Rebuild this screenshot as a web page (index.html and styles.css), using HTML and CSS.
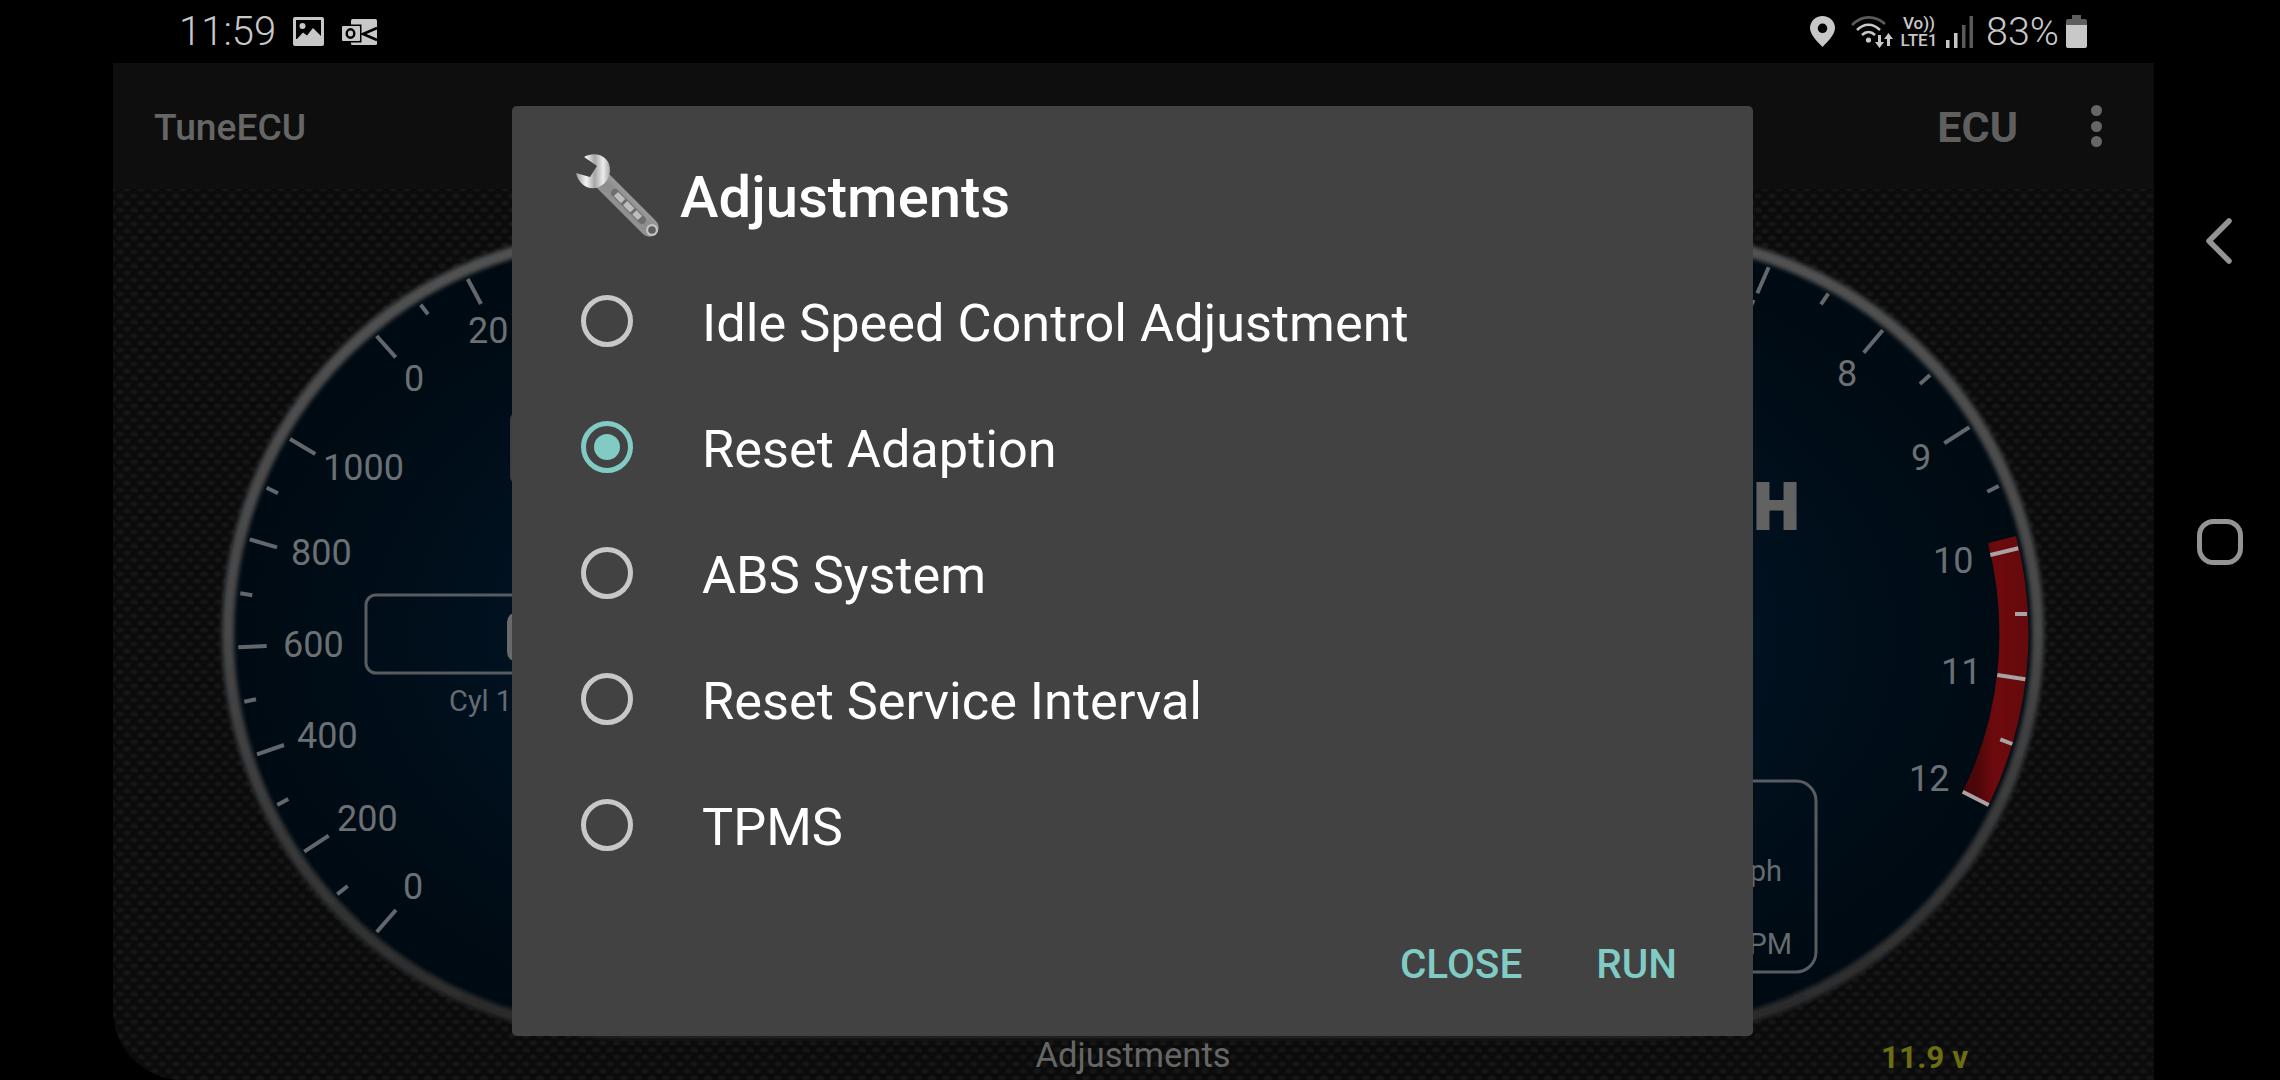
FILE: index.html
```html
<!DOCTYPE html>
<html lang="en">
<head>
<meta charset="utf-8">
<title>TuneECU</title>
<link rel="stylesheet" href="styles.css">
</head>
<body>
<div class="screen">
  <header class="status">
    <div class="status-left">
      <span class="clock">11:59</span>
      <svg class="ic-image" viewBox="0 0 31 29"><rect width="31" height="29" rx="2" fill="#c8c8c8"/><rect x="3" y="3" width="25" height="19" fill="#000"/><circle cx="9.500" cy="9" r="3" fill="#c8c8c8"/><path d="M3 23 L10 15.500 L14 18.500 L20 11 L28 19 V26 H3 Z" fill="#c8c8c8"/></svg>
      <svg class="ic-outlook" viewBox="0 0 35 26"><rect x="9" y="0" width="26" height="26" rx="1.500" fill="#c8c8c8"/><path d="M35 9 L21 15 L35 21" fill="none" stroke="#000" stroke-width="2.600"/><rect x="-1.500" y="5.500" width="21" height="18" fill="#000"/><rect x="0" y="7" width="18" height="15" rx="1" fill="#c8c8c8"/><ellipse cx="8.500" cy="14.500" rx="3.800" ry="4.200" fill="none" stroke="#000" stroke-width="2.400"/></svg>
    </div>
    <div class="status-right">
      <svg class="ic-pin" viewBox="0 0 25 31"><path fill-rule="evenodd" d="M12.500 0 C5.500 0 0 5.500 0 12 C0 19 8 26 12.500 31 C17 26 25 19 25 12 C25 5.500 19.500 0 12.500 0 Z M12.500 7.500 A4.800 4.800 0 1 1 12.500 17.100 A4.800 4.800 0 1 1 12.500 7.500 Z" fill="#c8c8c8"/></svg>
      <svg class="ic-wifi" viewBox="0 0 42 32"><path d="M1 9 C11 -1 24 -1 34 8" fill="none" stroke="#5a5a5a" stroke-width="2.600"/><path d="M6 14 C13 7 22 7 29 14" fill="none" stroke="#c8c8c8" stroke-width="2.600"/><path d="M11 19 C15 15 20 15 24 19" fill="none" stroke="#c8c8c8" stroke-width="2.600"/><circle cx="17.500" cy="24" r="2.600" fill="#c8c8c8"/><path d="M27 19 H30 V26 H33 L28.500 32 L24 26 H27 Z" fill="#c8c8c8"/><path d="M36 30 H39 V23 H42 L37.500 17 L33 23 H36 Z" fill="#c8c8c8"/></svg>
      <div class="volte"><span class="vo">Vo))</span><span class="lte">LTE1</span></div>
      <svg class="ic-signal" viewBox="0 0 27 32"><rect x="0" y="24" width="3.500" height="8" fill="#c8c8c8"/><rect x="8" y="17" width="3.500" height="15" fill="#c8c8c8"/><rect x="16" y="9" width="3.500" height="23" fill="#5a5a5a"/><rect x="23.500" y="0" width="3.500" height="32" fill="#5a5a5a"/></svg>
      <span class="pct">83%</span>
      <svg class="ic-battery" viewBox="0 0 21 33"><path d="M6 0 H15 V4 H19 Q21 4 21 6 V10 H0 V6 Q0 4 2 4 H6 Z" fill="#5e5e5e"/><path d="M0 10 H21 V31 Q21 33 19 33 H2 Q0 33 0 31 Z" fill="#c8c8c8"/></svg>
    </div>
  </header>

  <div class="body">
    <main class="app">
      <div class="toolbar">
        <span class="app-title">TuneECU</span>
        <div class="actions">
          <span class="ecu">ECU</span>
          <div class="dots"><i></i><i></i><i></i></div>
        </div>
      </div>
      <div class="panel">
        <svg class="gauge" viewBox="113 189 2041 891">
          <defs>
            <radialGradient id="face" gradientUnits="userSpaceOnUse" cx="1133" cy="634" r="900" gradientTransform="translate(0 300) scale(1 .53)">
              <stop offset="0" stop-color="#03172b"/>
              <stop offset=".65" stop-color="#011221"/>
              <stop offset="1" stop-color="#000a12"/>
            </radialGradient>
            <linearGradient id="rim" x1="0" y1="0" x2="0" y2="1">
              <stop offset="0" stop-color="#525252"/>
              <stop offset=".5" stop-color="#484848"/>
              <stop offset="1" stop-color="#2a2a2a"/>
            </linearGradient>
            <linearGradient id="redzone" gradientUnits="userSpaceOnUse" x1="1975" y1="0" x2="2030" y2="0">
              <stop offset="0" stop-color="#4a0608"/>
              <stop offset=".35" stop-color="#6e0a0e"/>
              <stop offset="1" stop-color="#640a0c"/>
            </linearGradient>
            <filter id="soft" x="-5%" y="-5%" width="110%" height="110%"><feGaussianBlur stdDeviation="2"/></filter>
          </defs>
          <rect class="face" x="222" y="230" width="1822" height="808" rx="404" fill="url(#face)"/>
          <rect class="rim" x="228" y="236" width="1810" height="796" rx="398" stroke="url(#rim)" filter="url(#soft)"/>
          <path class="red" d="M2002 539.700 A374 374 0 0 1 1975.700 798.300" stroke="url(#redzone)"/>

          <g class="ticks">
            <line x1="467.700" y1="279" x2="481" y2="304"/>
            <line x1="420.700" y1="304.700" x2="428" y2="314.300"/>
            <line x1="376.700" y1="336" x2="395.700" y2="357.300"/>
            <line x1="290" y1="439" x2="315.300" y2="454"/>
            <line x1="266.700" y1="487.700" x2="278" y2="493.300"/>
            <line x1="249.700" y1="539.300" x2="277" y2="547.300"/>
            <line x1="240.300" y1="593.300" x2="252.300" y2="595.300"/>
            <line x1="238.300" y1="647.300" x2="266.700" y2="646"/>
            <line x1="244.300" y1="701.700" x2="256" y2="699.300"/>
            <line x1="257" y1="754.300" x2="284" y2="745"/>
            <line x1="277.300" y1="805" x2="288.300" y2="799"/>
            <line x1="304.300" y1="851.700" x2="328.700" y2="835.700"/>
            <line x1="337.300" y1="894.300" x2="347.700" y2="886"/>
            <line x1="376.700" y1="932" x2="396" y2="910"/>
            <line x1="1757.300" y1="293.300" x2="1768.700" y2="267.300"/>
            <line x1="1821" y1="304.300" x2="1828.300" y2="293.700"/>
            <line x1="1863.700" y1="352.700" x2="1882.700" y2="330.300"/>
            <line x1="1920" y1="384" x2="1930" y2="375"/>
            <line x1="1944.300" y1="443.300" x2="1969.300" y2="427.300"/>
            <line x1="1987.300" y1="491.700" x2="1998.700" y2="486"/>
          </g>
          <g class="ticks-red">
            <line x1="1990.300" y1="555" x2="2018.300" y2="548.300"/>
            <line x1="2015" y1="614" x2="2027" y2="614"/>
            <line x1="1997.300" y1="675" x2="2025.300" y2="679.300"/>
            <line x1="2000.300" y1="739.300" x2="2012.300" y2="744"/>
            <line x1="1962.700" y1="791.700" x2="1988.700" y2="805"/>
          </g>

          <g class="scale">
            <text x="468" y="343">20</text>
            <text x="404" y="391">0</text>
            <text x="323" y="480">1000</text>
            <text x="291" y="565">800</text>
            <text x="283" y="657">600</text>
            <text x="297" y="748">400</text>
            <text x="337" y="831">200</text>
            <text x="403" y="899">0</text>
            <text x="1736" y="326">7</text>
            <text x="1837" y="386">8</text>
            <text x="1911" y="470">9</text>
            <text x="1933" y="573">10</text>
            <text x="1941" y="684">11</text>
            <text x="1909" y="791">12</text>
          </g>

          <rect class="box" x="366" y="595" width="300" height="78" rx="10"/>
          <rect class="box" x="1560" y="781" width="256" height="191" rx="20"/>
          <rect class="chip" x="510" y="413" width="40" height="70" rx="6"/>
          <rect class="chip-light" x="507" y="612" width="40" height="50" rx="10"/>
          <text class="small" x="449" y="711">Cyl 1</text>
          <text class="small end" x="1782" y="881">Kph</text>
          <text class="small end" x="1792" y="954">RPM</text>
          <text class="speed" x="1799" y="529">MPH</text>

          <text class="mode" x="1133" y="1067">Adjustments</text>
          <text class="volt" x="1881" y="1068">11.9 v</text>
        </svg>
      </div>
    </main>
    <nav class="rail">
      <svg class="nav-back" viewBox="0 0 30 48"><path d="M25 4 L5 24 L25 44" fill="none" stroke="#949494" stroke-width="5.500" stroke-linecap="round" stroke-linejoin="round"/></svg>
      <svg class="nav-home" viewBox="0 0 46 46"><rect x="2.500" y="2.500" width="41" height="41" rx="14" fill="none" stroke="#949494" stroke-width="5"/></svg>
    </nav>
  </div>

  <section class="dialog">
    <div class="dialog-head">
      <svg class="wrench" viewBox="0 0 84 84">
        <defs>
          <linearGradient id="steel" x1="0" y1="0" x2="1" y2="0">
            <stop offset="0" stop-color="#9a9a9a"/>
            <stop offset=".3" stop-color="#f4f4f4"/>
            <stop offset=".55" stop-color="#a6a6a6"/>
            <stop offset=".8" stop-color="#ececec"/>
            <stop offset="1" stop-color="#a8a8a8"/>
          </linearGradient>
          <linearGradient id="shaft" x1="0" y1="1" x2="1" y2="0">
            <stop offset="0" stop-color="#a8a8a8"/>
            <stop offset=".5" stop-color="#8c8c8c"/>
            <stop offset="1" stop-color="#d0d0d0"/>
          </linearGradient>
        </defs>
        <path d="M20 33 L33 20 L81 68 A9 9 0 0 1 68 81 Z" fill="url(#shaft)"/>
        <line x1="40" y1="40" x2="67" y2="67" stroke="#6e6e6e" stroke-width="8" stroke-linecap="round"/>
        <line x1="41" y1="41" x2="65" y2="65" stroke="#bdbdbd" stroke-width="6" stroke-dasharray="10 3"/>
        <circle cx="77" cy="77" r="6" fill="#c4c4c4"/>
        <circle cx="77" cy="77" r="3.800" fill="#5e5e5e"/>
        <path d="M9 4 C18 -1 30 1 34 11 C37 20 33 30 24 34 C14 38 4 32 1 20 L15 24 L22 13 Z" fill="url(#steel)"/>
      </svg>
      <h1 class="dialog-title">Adjustments</h1>
    </div>
    <div class="options">
      <div class="option"><span class="radio"></span><span class="option-label">Idle Speed Control Adjustment</span></div>
      <div class="option"><span class="radio on"></span><span class="option-label">Reset Adaption</span></div>
      <div class="option"><span class="radio"></span><span class="option-label">ABS System</span></div>
      <div class="option"><span class="radio"></span><span class="option-label">Reset Service Interval</span></div>
      <div class="option"><span class="radio"></span><span class="option-label">TPMS</span></div>
    </div>
    <div class="dialog-actions">
      <span class="btn">CLOSE</span>
      <span class="btn">RUN</span>
    </div>
  </section>
</div>
</body>
</html>
```

FILE: styles.css
```css
* { box-sizing: border-box; }
html, body { margin: 0; padding: 0; background: #000; }
.screen {
  position: relative;
  width: 2280px;
  height: 1080px;
  display: flex;
  flex-direction: column;
  overflow: hidden;
  font-family: Roboto, "Liberation Sans", sans-serif;
}

/* status bar */
.status {
  height: 63px;
  flex: none;
  display: flex;
  justify-content: space-between;
  padding: 0 193px 0 179px;
  color: #c8c8c8;
}
.status-left, .status-right { display: flex; align-items: center; }
.clock { font-size: 40px; font-weight: 300; line-height: 60px; width: 114px; }
.ic-image { width: 31px; height: 29px; }
.ic-outlook { width: 35px; height: 26px; margin-left: 18px; }
.ic-pin { width: 25px; height: 31px; }
.ic-wifi { width: 42px; height: 32px; margin-left: 16px; }
.volte { display: flex; flex-direction: column; align-items: center; width: 38px; margin-left: 7px; font-weight: 500; }
.vo { font-size: 17px; line-height: 18px; }
.lte { font-size: 17px; line-height: 17px; }
.ic-signal { width: 27px; height: 32px; margin-left: 8px; }
.pct { font-size: 39.5px; font-weight: 300; line-height: 60px; margin-left: 13px; }
.ic-battery { width: 21px; height: 33px; margin-left: 7px; }

/* body */
.body { flex: 1; display: flex; padding-left: 113px; min-height: 0; }
.app {
  width: 2041px;
  display: flex;
  flex-direction: column;
  border-bottom-left-radius: 70px;
  overflow: hidden;
}
.toolbar {
  height: 126px;
  flex: none;
  background: #0e0e0e;
  display: flex;
  justify-content: space-between;
  align-items: center;
  padding: 2px 52px 0 41px;
  color: #666;
}
.app-title { font-size: 37.2px; font-weight: 500; }
.actions { display: flex; align-items: center; gap: 73px; }
.ecu { font-size: 43px; font-weight: 700; color: #5f5f5f; }
.dots { display: flex; flex-direction: column; gap: 4.5px; margin-top: -2px; }
.dots i { display: block; width: 11px; height: 11px; border-radius: 50%; background: #666; }

.panel {
  flex: 1;
  background-color: #0b0b0b;
  background-image:
    radial-gradient(ellipse 5px 3.5px at 50% 50%, #171717 0, #161616 45%, transparent 100%),
    radial-gradient(ellipse 5px 3.5px at 50% 50%, #171717 0, #161616 45%, transparent 100%);
  background-size: 14px 14px;
  background-position: 0 0, 7px 7px;
}
.gauge { display: block; width: 2041px; height: 891px; }
.rim { fill: none; stroke-width: 12; }
.red { fill: none; stroke-width: 29; }
.ticks line { stroke: #63676b; stroke-width: 4; }
.ticks-red line { stroke: #a9a3a3; stroke-width: 4; }
.scale text { font-family: Roboto, sans-serif; font-size: 36px; fill: #6b7074; }
.box { fill: none; stroke: #585c61; stroke-width: 3; }
.chip { fill: #3b3e42; }
.chip-light { fill: #6a6a6a; }
.small { font-family: Roboto, sans-serif; font-size: 29px; fill: #666b70; }
.small.end { text-anchor: end; }
.speed { font-family: Roboto, sans-serif; font-size: 64px; font-weight: 900; fill: #626262; stroke: #626262; stroke-width: 2; text-anchor: end; }
.mode { font-family: Roboto, sans-serif; font-size: 34.5px; fill: #666; text-anchor: middle; }
.volt { font-family: Roboto, sans-serif; font-size: 31.5px; font-weight: 700; fill: #6c6c12; }

/* navigation rail */
.rail { flex: 1; display: flex; flex-direction: column; align-items: center; padding-top: 154px; }
.nav-back { width: 30px; height: 48px; margin-left: 3px; }
.nav-home { width: 46px; height: 46px; margin-top: 254px; margin-left: 5px; }

/* dialog */
.dialog {
  position: absolute;
  left: 512px;
  top: 106px;
  width: 1241px;
  height: 930px;
  background: #424242;
  border-radius: 5px;
  display: flex;
  flex-direction: column;
  color: #fff;
}
.dialog-head { height: 152px; flex: none; display: flex; align-items: flex-start; padding: 47px 0 0 63px; }
.wrench { width: 84px; height: 84px; flex: none; }
.dialog-title { margin: 12px 0 0 21px; font-size: 58px; line-height: 64px; font-weight: 500; }
.options { display: flex; flex-direction: column; }
.option { height: 126px; display: flex; align-items: center; padding-left: 69px; gap: 69px; }
.radio { position: relative; width: 52px; height: 52px; flex: none; border: 5px solid #c8c8c8; border-radius: 50%; }
.radio.on { border-color: #80cbc4; }
.radio.on::after { content: ""; position: absolute; inset: 8px; border-radius: 50%; background: #80cbc4; }
.option-label { font-size: 52.3px; line-height: 60px; margin-top: 4px; }
.dialog-actions { display: flex; justify-content: flex-end; gap: 74px; padding: 52px 76px 0 0; }
.btn { font-size: 40.5px; line-height: 48px; font-weight: 500; color: #80cbc4; }
```
